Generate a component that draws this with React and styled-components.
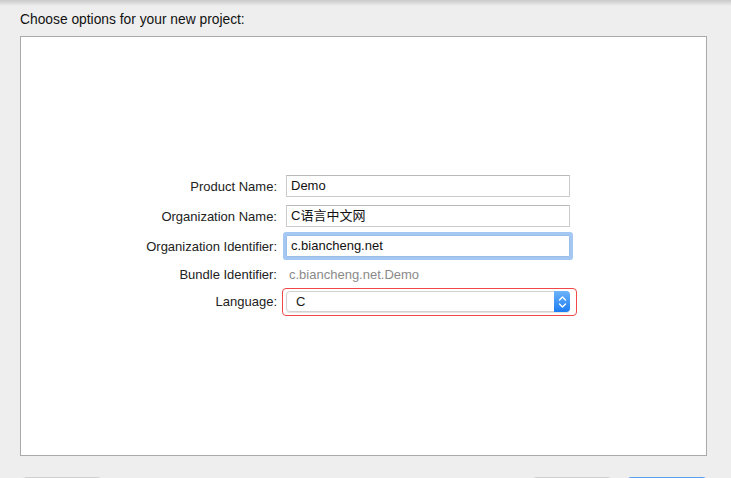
import React from 'react'
import styled, { createGlobalStyle } from 'styled-components'

const GlobalStyle = createGlobalStyle`
html, body {
    margin: 0;
    padding: 0;
    background: #eeeeee;
    overflow: hidden;
}
body {
    font-family: "Liberation Sans", Arial, "Noto Sans CJK SC", sans-serif;
    font-size: 13px;
    color: #1a1a1a;
}
`

const Window = styled.div`
width: 731px;
height: 478px;
background: #eeeeee;
position: relative;
overflow: hidden;
&::before {
    content: "";
    position: absolute;
    left: 0;
    right: 0;
    top: 0;
    height: 6px;
    background: linear-gradient(#c9c9c9, #eeeeee);
}
`

const Title = styled.div`
padding: 11px 0 0 20px;
height: 25px;
line-height: 17px;
font-size: 13.8px;
color: #111;
`

const Panel = styled.div`
margin-left: 20px;
width: 687px;
height: 420px;
box-sizing: border-box;
background: #fff;
border: 1px solid #a9a9a9;
padding-top: 138px;
`

const Form = styled.div`
display: grid;
grid-template-columns: 256px 284px;
column-gap: 9px;
row-gap: 8px;
grid-template-rows: 22px 22px 22px 18px 21px;
align-items: center;
`

const Label = styled.div`
text-align: right;
color: #222;
`

const Field = styled.div`
height: 22px;
box-sizing: border-box;
border: 1px solid #cbcbcb;
border-top-color: #b9b9b9;
padding: 0 4px;
line-height: 20px;
color: #111;
background: #fff;
${p => p.$focused && `
    box-shadow: 0 0 0 3px #a4c8f3;
    border-color: #9cbde6;
    border-radius: 1px;
`}
`

const Plain = styled.div`
color: #8a8a8a;
padding-left: 3px;
`

const Popup = styled.div`
position: relative;
height: 21px;
box-sizing: border-box;
border: 1px solid #d2d2d2;
border-radius: 4px;
display: flex;
align-items: center;
padding-left: 9px;
box-shadow: 0 1px 1px rgba(0,0,0,0.12);
`

const Stepper = styled.div`
position: absolute;
right: -1px;
top: -1px;
bottom: -1px;
width: 16px;
border-radius: 0 4px 4px 0;
background: linear-gradient(#6cb3fa, #1c7cf2);
display: flex;
align-items: center;
justify-content: center;
`

const Highlight = styled.div`
position: absolute;
left: -5px;
right: -8px;
top: -4px;
bottom: -5px;
border: 1.5px solid #f04848;
border-radius: 4px;
pointer-events: none;
`

const Footer = styled.div`
display: flex;
padding: 21px 24px 0 22px;
gap: 15px;
`

const Spacer = styled.div`
flex: 1;
`

const Button = styled.div`
width: 80px;
height: 22px;
box-sizing: border-box;
border-radius: 4px;
border: 1px solid ${p => (p.$primary ? '#5a9ef0' : '#d0d0d0')};
background: ${p => (p.$primary ? '#62a8f4' : '#fff')};
position: relative;
overflow: hidden;
`

const Dot = styled.div`
position: absolute;
left: 19px;
top: -3px;
width: 24px;
height: 24px;
border-radius: 50%;
background: rgba(235, 110, 120, 0.75);
`

function Chevrons() {
    return (
        <svg width="9" height="14" viewBox="0 0 9 14">
            <path d="M1.5 5 L4.5 2 L7.5 5" fill="none" stroke="#fff" strokeWidth="1.4" strokeLinecap="round" strokeLinejoin="round" />
            <path d="M1.5 9 L4.5 12 L7.5 9" fill="none" stroke="#fff" strokeWidth="1.4" strokeLinecap="round" strokeLinejoin="round" />
        </svg>
    )
}

export default function App() {
    return (
        <Window>
            <GlobalStyle />
            <Title>Choose options for your new project:</Title>
            <Panel>
                <Form>
                    <Label>Product Name:</Label>
                    <Field>Demo</Field>
                    <Label>Organization Name:</Label>
                    <Field>C语言中文网</Field>
                    <Label>Organization Identifier:</Label>
                    <Field $focused>c.biancheng.net</Field>
                    <Label>Bundle Identifier:</Label>
                    <Plain>c.biancheng.net.Demo</Plain>
                    <Label>Language:</Label>
                    <Popup>
                        C
                        <Stepper><Chevrons /></Stepper>
                        <Highlight />
                    </Popup>
                </Form>
            </Panel>
            <Footer>
                <Button />
                <Spacer />
                <Button />
                <Button $primary><Dot /></Button>
            </Footer>
        </Window>
    )
}
